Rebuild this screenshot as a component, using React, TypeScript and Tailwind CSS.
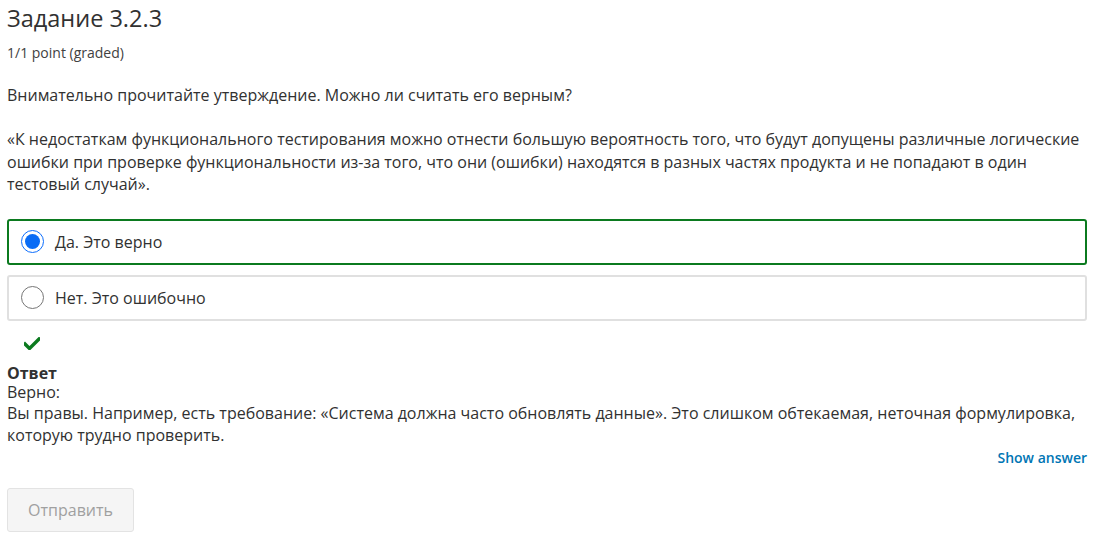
import React, { useState } from "react";

export default function App() {
  const [choice, setChoice] = useState("yes");

  const options = [
    { id: "yes", label: "Да. Это верно" },
    { id: "no", label: "Нет. Это ошибочно" },
  ];

  return (
    <div className="w-[1095px] h-[551px] bg-white px-[7px] pt-[2px] text-[#313131] font-['Open_Sans',sans-serif] overflow-hidden">
      <h3 className="text-[23.5px] leading-[32px] text-[#313131]">Задание 3.2.3</h3>
      <div className="mt-[9px] text-[14px] leading-[20px] text-[#414141]">1/1 point (graded)</div>

      <p className="mt-[21px] text-[16px] leading-[22px]">
        Внимательно прочитайте утверждение. Можно ли считать его верным?
      </p>
      <p className="mt-[22px] text-[16px] leading-[22.5px] pr-[4px]">
        «К недостаткам функционального тестирования можно отнести большую вероятность того, что будут допущены различные логические ошибки при проверке функциональности из-за того, что они (ошибки) находятся в разных частях продукта и не попадают в один тестовый случай».
      </p>

      {/* answer choices */}
      <div className="mt-[23px] w-[1080px] flex flex-col gap-[10px]">
        {options.map((o) => {
          const selected = choice === o.id;
          return (
            <label
              key={o.id}
              onClick={() => setChoice(o.id)}
              className={
                selected
                  ? "h-[46px] flex items-center gap-[11px] pl-[12px] rounded-[3px] border-2 border-[#0b7a1f] cursor-pointer"
                  : "h-[46px] flex items-center gap-[11px] pl-[12px] rounded-[3px] border-2 border-[#e0e0e0] cursor-pointer"
              }
            >
              {selected ? (
                <span className="w-[23px] h-[23px] rounded-full border border-[#0d6efd] flex items-center justify-center">
                  <span className="w-[15px] h-[15px] rounded-full bg-[#0a6cf5]" />
                </span>
              ) : (
                <span className="w-[23px] h-[23px] rounded-full border border-[#767676]" />
              )}
              <span className="text-[16px] text-[#313131]">{o.label}</span>
            </label>
          );
        })}
      </div>

      {/* correct indicator */}
      <div className="mt-[14px] pl-[17px] h-[18px] flex items-center">
        <svg width="16" height="13" viewBox="0 0 16 13">
          <path d="M1 7 L5.5 11.5 L15 2" fill="none" stroke="#0b7a1f" strokeWidth="3.4" strokeLinecap="square" />
        </svg>
      </div>

      <div className="mt-[10px] text-[16px]">
        <div className="font-bold leading-[20px]">Ответ</div>
        <div className="leading-[19px]">Верно:</div>
        <div className="leading-[22.5px]">
          Вы правы. Например, есть требование: «Система должна часто обновлять данные». Это слишком обтекаемая, неточная формулировка, которую трудно проверить.
        </div>
      </div>

      <div className="flex justify-end w-[1080px] mt-[1px]">
        <button className="text-[14px] font-semibold text-[#0075b4] leading-[20px]">Show answer</button>
      </div>

      <button
        disabled
        className="mt-[20px] w-[127px] h-[44px] rounded-[3px] border border-[#e3e3e3] bg-[#f5f5f5] text-[16px] text-[#a0a0a0]"
      >
        Отправить
      </button>
    </div>
  );
}
